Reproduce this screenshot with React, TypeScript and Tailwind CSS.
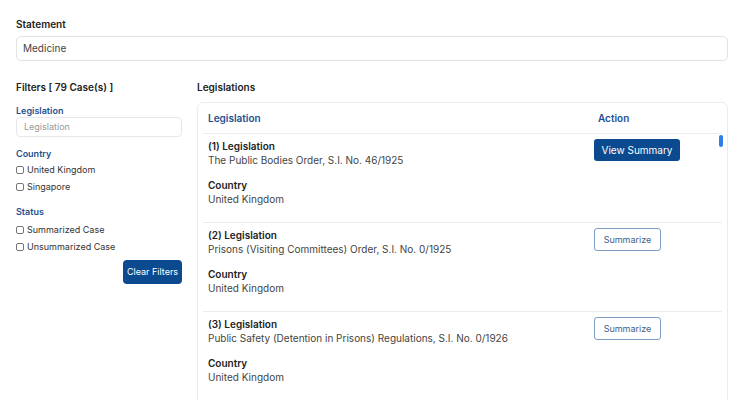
import React from "react";

const rows = [
  { n: 1, title: "The Public Bodies Order, S.I. No. 46/1925", country: "United Kingdom", summarized: true },
  { n: 2, title: "Prisons (Visiting Committees) Order, S.I. No. 0/1925", country: "United Kingdom", summarized: false },
  { n: 3, title: "Public Safety (Detention in Prisons) Regulations, S.I. No. 0/1926", country: "United Kingdom", summarized: false },
];

function Check({ label }: { label: string }) {
  return (
    <label className="flex items-center gap-[3px] h-[17px] text-[9px] text-[#333]">
      <span className="w-[8px] h-[8px] border border-[#767676] rounded-[2px] bg-white shrink-0" />
      <span>{label}</span>
    </label>
  );
}

export default function App() {
  return (
    <div
      className="w-[743px] h-[400px] overflow-hidden bg-white pl-[16px] pr-[15px] pt-[17px]"
      style={{ fontFamily: "Inter, 'Noto Sans', sans-serif" }}
    >
      <div className="text-[10px] leading-[14px] font-semibold text-[#222]">Statement</div>
      <div className="mt-[5px] h-[25px] border border-[#e3e3e3] rounded-[5px] flex items-center px-[6px] text-[10px] text-[#444]">
        Medicine
      </div>

      <div className="flex gap-[15px] mt-[19px]">
        {/* Left filters */}
        <div className="w-[166px] shrink-0">
          <div className="text-[10px] leading-[14px] font-semibold text-[#222]">Filters [ 79 Case(s) ]</div>
          <div className="mt-[11px] text-[9px] leading-[12px] font-semibold text-[#1d4f91]">Legislation</div>
          <div className="mt-0 h-[20px] border border-[#e8e8e8] rounded-[4px] flex items-center px-[7px] text-[9px] text-[#999]">
            Legislation
          </div>
          <div className="mt-[11px] text-[9px] leading-[12px] font-semibold text-[#1d4f91]">Country</div>
          <div className="mt-[1px]">
            <Check label="United Kingdom" />
            <Check label="Singapore" />
          </div>
          <div className="mt-[11px] text-[9px] leading-[12px] font-semibold text-[#1d4f91]">Status</div>
          <div className="mt-[3px]">
            <Check label="Summarized Case" />
            <Check label="Unsummarized Case" />
          </div>
          <div className="flex justify-end mt-[5px]">
            <button className="h-[24px] w-[59px] rounded-[4px] bg-[#0b4a8f] text-white text-[9px]">Clear Filters</button>
          </div>
        </div>

        {/* Right */}
        <div className="flex-1 min-w-0">
          <div className="text-[10px] leading-[14px] font-semibold text-[#222]">Legislations</div>
          <div className="mt-[8px] border border-[#ececec] rounded-[6px] px-[5px] h-[320px] relative">
            <div className="flex items-center h-[31px] border-b border-[#ededed] text-[10px] font-semibold text-[#1d4f91]">
              <div className="flex-1 pl-[5px]">Legislation</div>
              <div className="w-[128px] pl-[4px]">Action</div>
            </div>
            <div className="absolute right-[4px] top-[32px] w-[4px] h-[12px] rounded-[2px] bg-[#2f7ee6]" />
            {rows.map((r) => (
              <div key={r.n} className="flex border-b border-[#ededed] h-[89px]">
                <div className="flex-1 pl-[5px] pt-[5px] text-[10px] leading-[14px]">
                  <div className="font-semibold text-[#222]">({r.n}) Legislation</div>
                  <div className="text-[#444]">{r.title}</div>
                  <div className="mt-[11px] font-semibold text-[#222]">Country</div>
                  <div className="text-[#444]">{r.country}</div>
                </div>
                <div className="w-[128px] pt-[5px] flex items-start">
                  {r.summarized ? (
                    <button className="h-[22px] w-[86px] rounded-[3px] bg-[#0b4a8f] text-white text-[10px]">View Summary</button>
                  ) : (
                    <button className="h-[23px] w-[67px] rounded-[3px] border border-[#7e9cc4] bg-white text-[#3b5f8f] text-[9px]">Summarize</button>
                  )}
                </div>
              </div>
            ))}
          </div>
        </div>
      </div>
    </div>
  );
}
